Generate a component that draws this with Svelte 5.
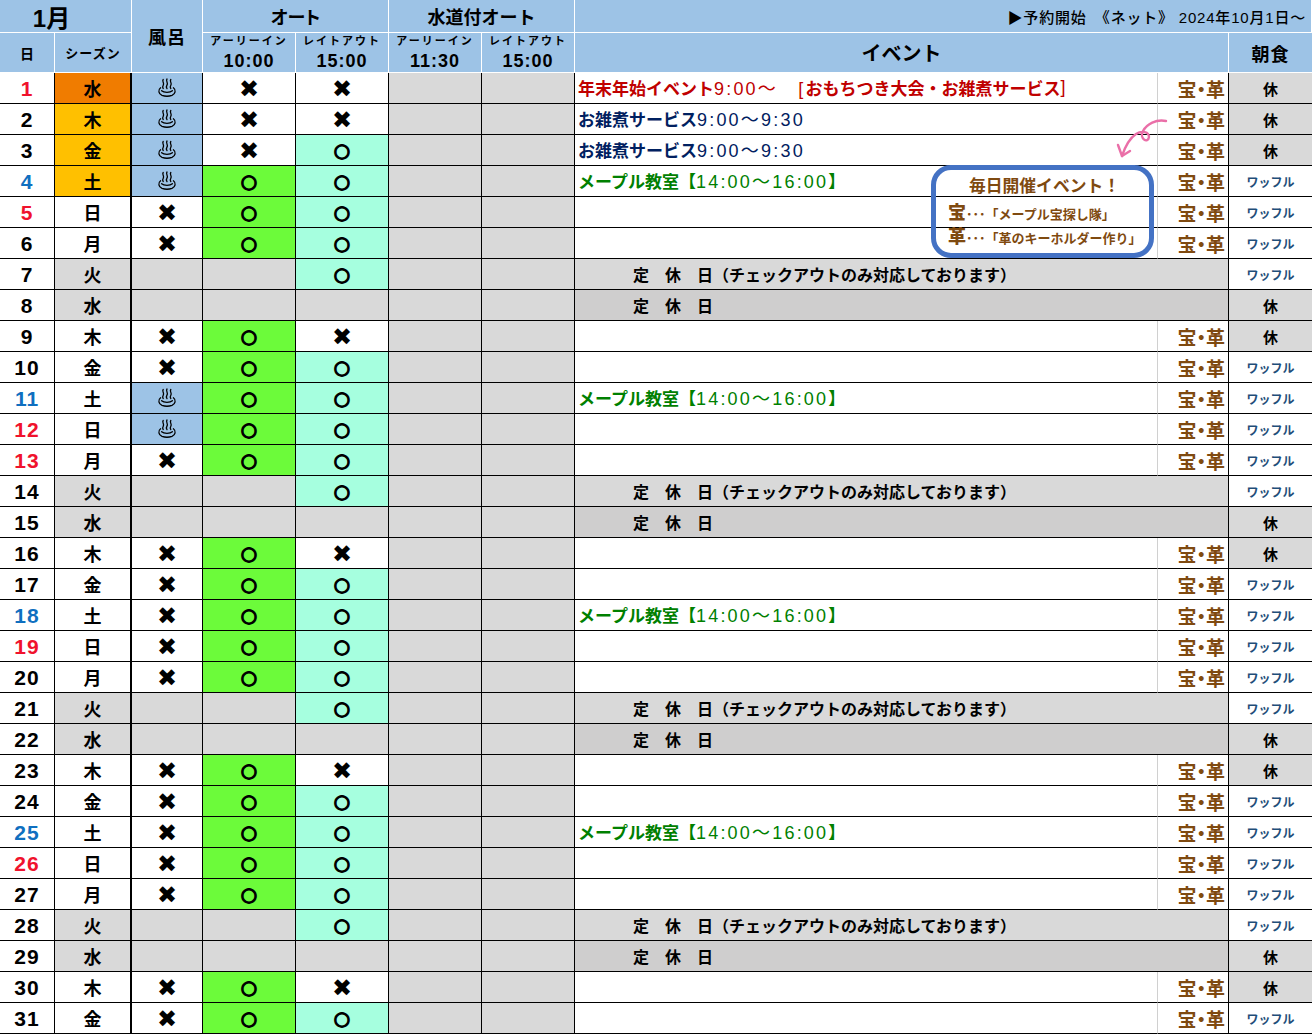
<script lang="ts">
  interface Seg { t: string; b?: boolean }
  interface Day {
    d: number
    wd: string
    tone: string
    season: string
    bath: string
    early: string
    late: string
    closed: boolean
    event: Seg[] | null
    eventColor: string
    rest: boolean
  }

  const weekdays = ['水', '木', '金', '土', '日', '月', '火']
  const red = [1, 5, 12, 13, 19, 26]
  const restDays = [1, 2, 3, 8, 9, 15, 16, 22, 23, 29, 30]
  const maple: Seg[] = [{ t: 'メープル教室【', b: true }, { t: '14:00～16:00' }, { t: '】', b: true }]
  const zoni: Seg[] = [{ t: 'お雑煮サービス', b: true }, { t: '9:00～9:30' }]

  function makeDay(d: number): Day {
    const wd = weekdays[(d - 1) % 7]
    // 元日は水曜だが営業
    const closed = d !== 1 && (wd === '火' || wd === '水')
    let tone = ''
    if (red.includes(d)) tone = 'red'
    else if (wd === '土') tone = 'blue'

    let season = closed ? 'off' : ''
    if (d === 1) season = 'peak'
    else if (d <= 4) season = 'high'

    let bath = 'x'
    if (closed) bath = ''
    else if (d <= 4 || d === 11 || d === 12) bath = 'yu'

    let early = 'o'
    if (closed) early = ''
    else if (d <= 3) early = 'x'

    let late = 'o'
    if (closed && wd === '水') late = ''
    else if (wd === '木' || d === 1) late = 'x'

    let event: Seg[] | null = null
    let eventColor = ''
    if (d === 1) {
      event = [
        { t: '年末年始イベント', b: true },
        { t: '9:00～　[' },
        { t: 'おもちつき大会・お雑煮サービス', b: true },
        { t: ']' }
      ]
      eventColor = 'ev-red'
    } else if (d === 2 || d === 3) {
      event = zoni
      eventColor = 'ev-navy'
    } else if (wd === '土') {
      event = maple
      eventColor = 'ev-green'
    }

    return { d, wd, tone, season, bath, early, late, closed, event, eventColor, rest: restDays.includes(d) }
  }

  const days = Array.from({ length: 31 }, (_, i) => makeDay(i + 1))
</script>

<div class="sheet">
  <div class="grid">
    <div class="th month">1月</div>
    <div class="th bath-h">風呂</div>
    <div class="th span2 group auto">オート</div>
    <div class="th span2 group">水道付オート</div>
    <div class="th booking">▶予約開始　《ネット》 2024年10月1日～</div>

    <div class="th sub">日</div>
    <div class="th sub season-h">シーズン</div>
    {#each [['アーリーイン', '10:00'], ['レイトアウト', '15:00'], ['アーリーイン', '11:30'], ['レイトアウト', '15:00']] as [label, time]}
      <div class="th slot"><span class="slot-l">{label}</span><span class="slot-t">{time}</span></div>
    {/each}
    <div class="th event-h">イベント</div>
    <div class="th food-h">朝食</div>

    {#each days as row}
      <div class="td num {row.tone}">{row.d}</div>
      <div class="td wd season-{row.season}">{row.wd}</div>
      <div class="td mark" class:yu={row.bath === 'yu'} class:gray={row.closed}>
        {#if row.bath === 'yu'}
          <svg class="onsen" viewBox="0 0 20 20" fill="none" stroke="#000" stroke-width="1.3" stroke-linecap="round">
            <path d="M6.2 1.5c-1.6 2 1.6 3.6 0 5.8-.7 1-.9 2 0 3.2M10 1c-1.6 2 1.6 3.8 0 6-.7 1-.9 2.2 0 3.600M13.800 1.500c-1.600 2 1.600 3.600 0 5.800-.7 1-.9 2 0 3.200"/>
            <path d="M3.600 9.800C.6 12 1.600 16 5 17.400c3 1 7 1 10 0 3.400-1.400 4.400-5.400 1.400-7.600"/>
            <path d="M4.600 12.800c2.400 2.200 8.400 2.200 10.800 0"/>
          </svg>
        {:else if row.bath === 'x'}<span class="cross">✖</span>{/if}
      </div>
      <div class="td mark" class:green={row.early === 'o'} class:gray={row.closed}>
        {#if row.early === 'o'}<span class="ring">○</span>{:else if row.early === 'x'}<span class="cross">✖</span>{/if}
      </div>
      <div class="td mark" class:mint={row.late === 'o'} class:gray={row.late === ''}>
        {#if row.late === 'o'}<span class="ring">○</span>{:else if row.late === 'x'}<span class="cross">✖</span>{/if}
      </div>
      <div class="td gray"></div>
      <div class="td gray"></div>
      {#if row.closed}
        <div class="td closed" class:darker={row.wd === '水'}>
          定　休　日{#if row.wd === '火'}（チェックアウトのみ対応しております）{/if}
        </div>
      {:else}
        <div class="td event {row.eventColor}">
          {#if row.event}
            {#each row.event as seg}<span class:bold={seg.b} class:thin={!seg.b}>{seg.t}</span>{/each}
          {/if}
        </div>
        <div class="td treasure">宝・革</div>
      {/if}
      {#if row.rest}
        <div class="td food gray">休</div>
      {:else}
        <div class="td food"><span class="waffle">ワッフル</span></div>
      {/if}
    {/each}
  </div>

  <svg class="arrow" viewBox="0 0 60 50" fill="none" stroke="#ea6fa8" stroke-width="2.4" stroke-linecap="round" stroke-linejoin="round">
    <path d="M56 6C46 4 37 9 33 16C29 24 38 29 39 22C39 17 32 15 26 19C20 23 15 32 12 41"/>
    <path d="M8 30L12 41L20 36"/>
  </svg>

  <div class="callout">
    <div class="callout-title">毎日開催イベント！</div>
    <div class="callout-line"><b>宝</b>･･･「メープル宝探し隊」</div>
    <div class="callout-line"><b>革</b>･･･「革のキーホルダー作り」</div>
  </div>
</div>

<style>
  :global(body) {
    margin: 0;
    background: #fff;
  }

  .sheet {
    position: relative;
    width: 1312px;
    height: 1034px;
    overflow: hidden;
    font-family: "Liberation Sans", "Noto Sans CJK JP", sans-serif;
    color: #000;
  }

  .grid {
    display: grid;
    grid-template-columns: 55px 77px 71px 93px 93px 93px 93px 583px 71px 83px;
    grid-template-rows: 33px 40px repeat(31, 31px);
  }

  /* header */
  .th {
    display: flex;
    align-items: center;
    justify-content: center;
    background: #9dc3e6;
    border-right: 1px solid #fff;
    border-bottom: 1px solid #fff;
    box-sizing: border-box;
    font-weight: 700;
    min-width: 0;
    white-space: nowrap;
  }
  .month { grid-column: span 2; font-size: 24px; padding-right: 28px; }
  .bath-h { grid-row: span 2; font-size: 18px; letter-spacing: 1px; }
  .span2 { grid-column: span 2; }
  .group { font-size: 18px; }
  .auto { font-feature-settings: "palt"; }
  .booking {
    grid-column: span 3;
    justify-content: flex-end;
    padding-right: 5px;
    font-size: 15px;
    font-weight: 500;
    letter-spacing: 0.8px;
  }
  .sub { font-size: 14px; }
  .season-h { font-size: 13px; letter-spacing: 1px; }
  .slot { flex-direction: column; line-height: 1; gap: 5px; }
  .slot-l { font-size: 11px; letter-spacing: 2px; }
  .slot-t { font-size: 18px; letter-spacing: 1px; }
  .event-h { grid-column: span 2; font-size: 20px; }
  .food-h { font-size: 18px; letter-spacing: 1px; border-right: 0; }

  /* body cells */
  .td {
    display: flex;
    align-items: center;
    justify-content: center;
    box-sizing: border-box;
    border-right: 1px solid #000;
    border-bottom: 1px solid #000;
    font-weight: 700;
    min-width: 0;
    min-height: 0;
    overflow: hidden;
    white-space: nowrap;
  }
  .num { font-size: 21px; letter-spacing: 1px; padding-top: 2px; }
  .num.red { color: #f0122d; }
  .num.blue { color: #0f6fc0; }
  .wd { font-size: 18px; border-right: 2px solid #000; }
  .season-peak { background: #f07c00; }
  .season-high { background: #ffc000; }
  .season-off { background: #d9d9d9; }
  .gray { background: #d9d9d9; }
  .green { background: #6cfb3a; }
  .mint { background: #a6ffdf; }
  .yu { background: #9dc3e6; }
  .mark { font-size: 18px; }
  .cross { font-family: "DejaVu Sans", sans-serif; font-size: 24px; line-height: 1; padding-top: 2px; }
  .ring {
    font-family: "DejaVu Sans", sans-serif;
    font-size: 19px;
    line-height: 1;
    -webkit-text-stroke: 1.4px #000;
  }
  .onsen { width: 20px; height: 20px; }

  .event {
    justify-content: flex-start;
    padding: 0 0 2px 3px;
    font-size: 17px;
    border-right: 1px solid #d0d0d0;
  }
  .event .thin { font-weight: 400; letter-spacing: 2.2px; font-size: 18px; }
  .ev-red { color: #c00000; }
  .ev-navy { color: #002060; }
  .ev-green { color: #008000; }

  .closed {
    grid-column: span 2;
    justify-content: flex-start;
    padding-left: 58px;
    background: #d9d9d9;
    font-size: 16px;
  }
  .closed.darker { background: #cfcece; }

  .treasure {
    justify-content: flex-end;
    padding-right: 3px;
    font-size: 19px;
    font-feature-settings: "palt";
    color: #7f4a10;
  }
  .food { font-size: 15px; border-right: 0; }
  .waffle {
    color: #1f4e79;
    font-size: 12px;
  }

  /* floating note */
  .arrow {
    position: absolute;
    left: 1110px;
    top: 115px;
    width: 60px;
    height: 50px;
  }
  .callout {
    position: absolute;
    left: 931px;
    top: 165px;
    width: 223px;
    height: 93px;
    box-sizing: border-box;
    border: 5px solid #4472c4;
    border-radius: 20px;
    padding: 3px 8px 0 12px;
    display: flex;
    flex-direction: column;
    color: #7f4a10;
    font-weight: 700;
    white-space: nowrap;
  }
  .callout-title { font-size: 16.8px; line-height: 28px; text-align: center; }
  .callout-line { font-size: 13px; line-height: 24px; height: 24px; }
  .callout-line b { font-size: 18px; }
</style>
